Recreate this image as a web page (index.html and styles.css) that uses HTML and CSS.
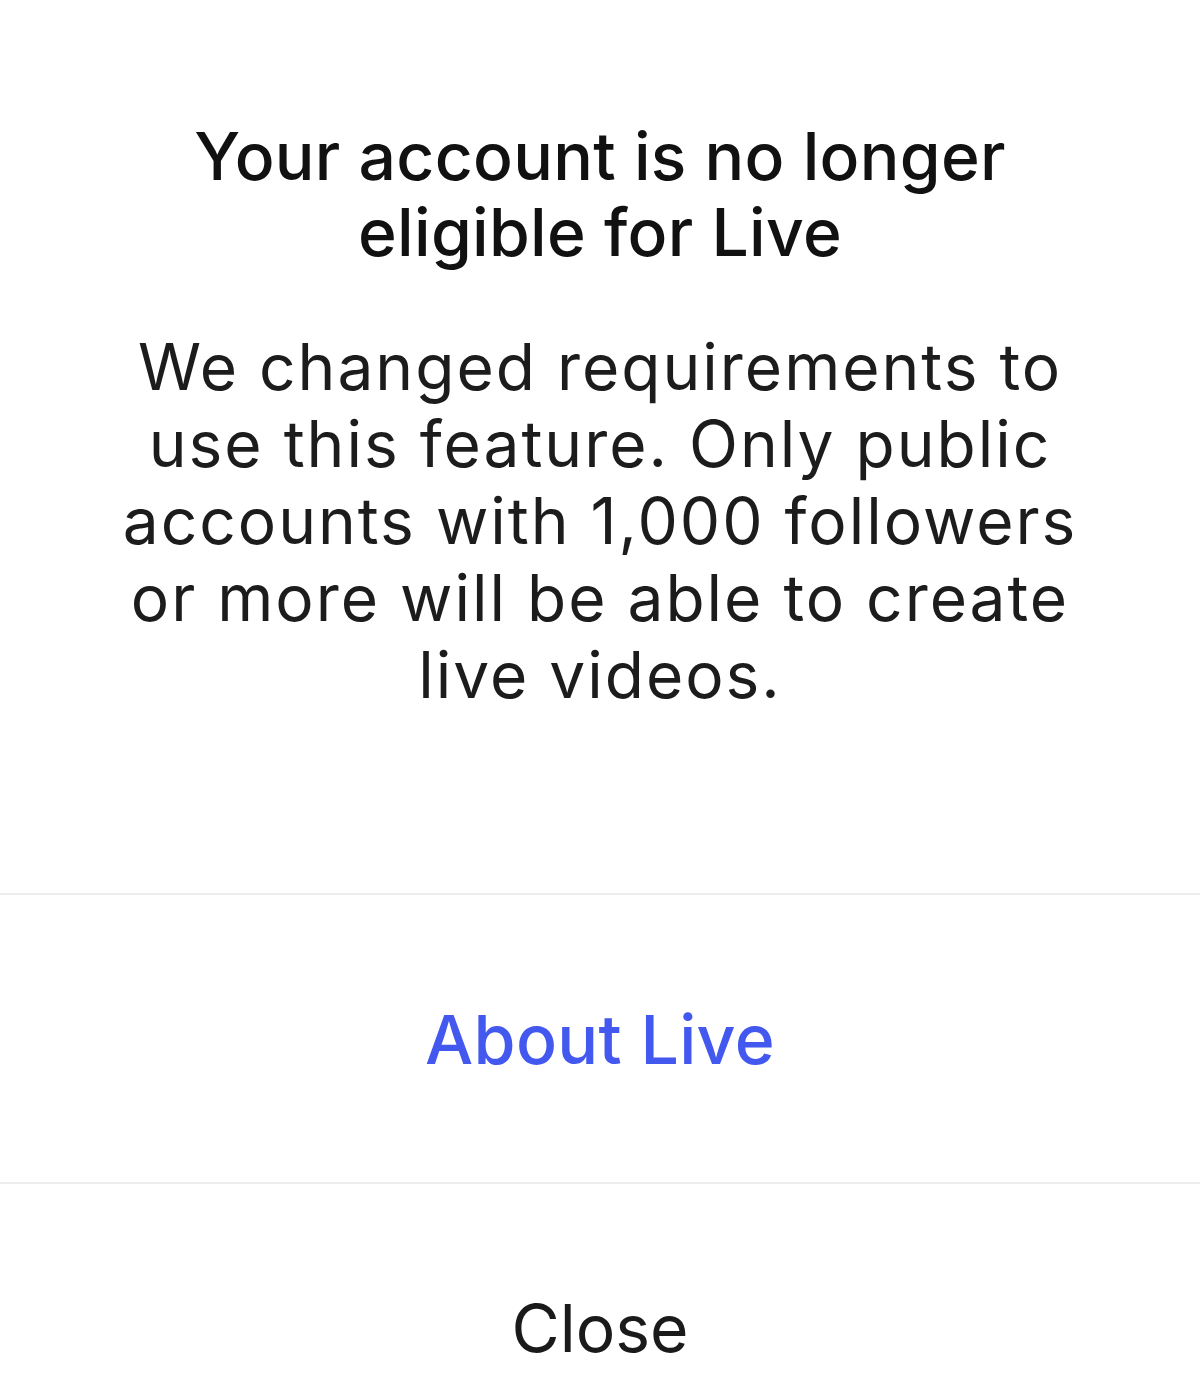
FILE: index.html
```html
<!DOCTYPE html>
<html lang="en">
<head>
<meta charset="utf-8">
<title>No longer eligible for Live</title>
<link rel="stylesheet" href="styles.css">
</head>
<body>
<div class="dialog">
  <div class="content">
    <h1 class="title">Your account is no longer<br>eligible for Live</h1>
    <p class="message">We changed requirements to<br>use this feature. Only public<br>accounts with 1,000 followers<br>or more will be able to create<br>live videos.</p>
  </div>
  <button class="action action-link">About Live</button>
  <button class="action action-close">Close</button>
</div>
</body>
</html>
```

FILE: styles.css
```css
html, body {
  margin: 0;
  padding: 0;
  background: #ffffff;
  overflow: hidden;
}

body {
  font-family: Inter, "Noto Sans", "Liberation Sans", sans-serif;
  color: #000;
}

.dialog {
  display: flex;
  flex-direction: column;
  width: 1200px;
  height: 1400px;
  overflow: hidden;
}

.content {
  display: flex;
  flex-direction: column;
  align-items: center;
  padding: 118px 40px 180px;
  text-align: center;
  flex-shrink: 0;
}

.title {
  margin: 0;
  font-size: 66px;
  font-weight: 500;
  line-height: 76px;
  color: #111;
  letter-spacing: 0.3px;
  white-space: nowrap;
}

.message {
  margin: 58px 0 0;
  font-size: 64px;
  font-weight: 400;
  line-height: 77px;
  letter-spacing: 2px;
  color: #1c1c1c;
  white-space: nowrap;
}

.action {
  display: flex;
  align-items: center;
  justify-content: center;
  height: 289px;
  border: 0;
  border-top: 2px solid #ededed;
  background: #fff;
  font-family: inherit;
  font-size: 66px;
  padding: 0;
  margin: 0;
  flex-shrink: 0;
}

.action-link {
  color: #4358ee;
  font-weight: 500;
  font-size: 68px;
  letter-spacing: 0.3px;
}

.action-close {
  color: #1a1a1a;
  font-weight: 400;
}
```
